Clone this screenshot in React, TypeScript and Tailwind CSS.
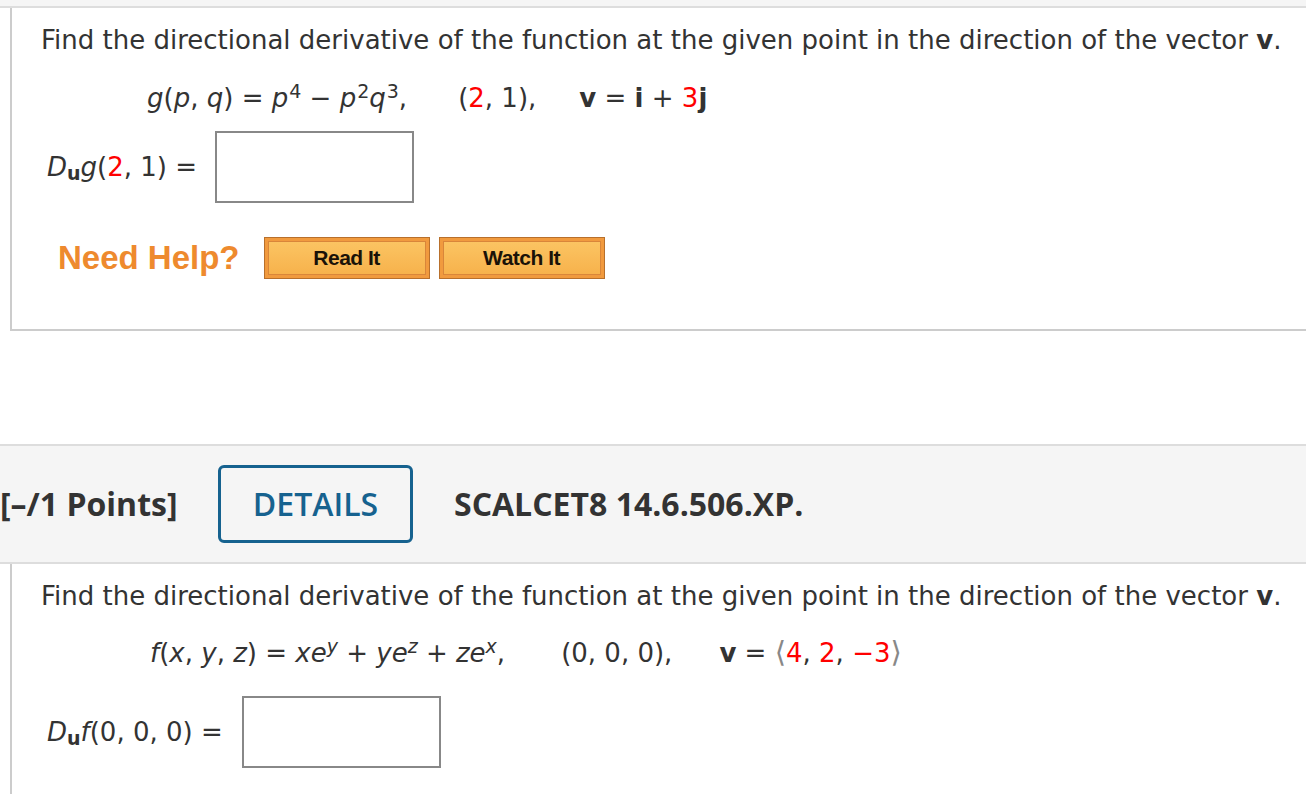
export default function App() {
  const v = "font-['DejaVu_Sans',sans-serif]"
  return (
    <div className={`w-[1306px] h-[794px] overflow-hidden bg-white text-[#333] ${v}`}>
      <div className="h-[8px] bg-[#f5f5f5] border-b-2 border-[#ddd]" />

      {/* question 1 */}
      <div className="ml-[10px] h-[323px] border-l-2 border-b-2 border-[#ccc] pl-[29px] pt-[13px]">
        <p className="text-[26px] leading-[38px]">
          Find the directional derivative of the function at the given point in the direction of the vector <b>v</b>.
        </p>
        <div className="mt-[20px] ml-[106px] flex items-baseline text-[26px] leading-[38px]">
          <span>
            <i>g</i>(<i>p</i>, <i>q</i>) = <i>p</i>
            <sup className="text-[19px] ml-[1px]">4</sup> − <i>p</i>
            <sup className="text-[19px] ml-[1px]">2</sup>
            <i>q</i>
            <sup className="text-[19px] ml-[1px]">3</sup>,
          </span>
          <span className="ml-[51px]">
            (<span className="text-[#f00]">2</span>, 1),
          </span>
          <span className="ml-[43px]">
            <b>v</b> = <b>i</b> + <span className="text-[#f00]">3</span>
            <b>j</b>
          </span>
        </div>
        <div className="mt-[14px] ml-[6px] flex items-center gap-[18px]">
          <span className="text-[26px]">
            <i>D</i>
            <sub className="text-[19px] font-bold">u</sub>
            <i>g</i>(<span className="text-[#f00]">2</span>, 1) =
          </span>
          <div className="w-[199px] h-[72px] border-2 border-[#888] bg-white" />
        </div>
        <div className="mt-[30px] ml-[17px] flex items-center">
          <span className="font-['Liberation_Sans',sans-serif] font-bold text-[33px] text-[#ee8a2e] mr-[24px]">
            Need Help?
          </span>
          <HelpButton label="Read It" />
          <div className="w-[9px]" />
          <HelpButton label="Watch It" />
        </div>
      </div>

      <div className="h-[113px]" />

      {/* header band */}
      <div className="h-[120px] border-y-2 border-[#ddd] bg-[#f5f5f5] flex items-center font-['Open_Sans',sans-serif]">
        <span className="font-bold text-[32px] text-[#333] w-[218px] whitespace-nowrap">[–/1 Points]</span>
        <div className="w-[195px] h-[78px] border-[3px] border-[#16628f] rounded-[6px] flex items-center justify-center text-[32px] font-semibold text-[#16628f]">
          DETAILS
        </div>
        <span className="ml-[41px] font-bold text-[32px] text-[#333]">SCALCET8 14.6.506.XP.</span>
      </div>

      {/* question 2 */}
      <div className="ml-[10px] h-[300px] border-l-2 border-[#ccc] pl-[29px] pt-[13px]">
        <p className="text-[26px] leading-[38px]">
          Find the directional derivative of the function at the given point in the direction of the vector <b>v</b>.
        </p>
        <div className="mt-[18px] ml-[109px] flex items-baseline text-[26px] leading-[38px]">
          <span>
            <i>f</i>(<i>x</i>, <i>y</i>, <i>z</i>) = <i>xe</i>
            <sup className="text-[19px] italic">y</sup> + <i>ye</i>
            <sup className="text-[19px] italic">z</sup> + <i>ze</i>
            <sup className="text-[19px] italic">x</sup>,
          </span>
          <span className="ml-[56px]">(0, 0, 0),</span>
          <span className="ml-[47px]">
            <b>v</b> = <span className="text-[#888] text-[29px]">⟨</span>
            <span className="text-[#f00]">4</span>, <span className="text-[#f00]">2</span>,{" "}
            <span className="text-[#f00]">−3</span>
            <span className="text-[#888] text-[29px]">⟩</span>
          </span>
        </div>
        <div className="mt-[24px] ml-[6px] flex items-center gap-[19px]">
          <span className="text-[26px]">
            <i>D</i>
            <sub className="text-[19px] font-bold">u</sub>
            <i>f</i>(0, 0, 0) =
          </span>
          <div className="w-[199px] h-[72px] border-2 border-[#888] bg-white" />
        </div>
      </div>
    </div>
  )
}

function HelpButton({ label }: { label: string }) {
  return (
    <div className="w-[166px] h-[42px] border border-[#b8702c] bg-[#f19a3e] p-[3px]">
      <div className="h-full border border-[#d9863a] bg-gradient-to-b from-[#fbc462] to-[#f7b24c] flex items-center justify-center font-['Liberation_Sans',sans-serif] font-bold text-[21px] tracking-[-0.5px] text-[#1a1208]">
        {label}
      </div>
    </div>
  )
}
